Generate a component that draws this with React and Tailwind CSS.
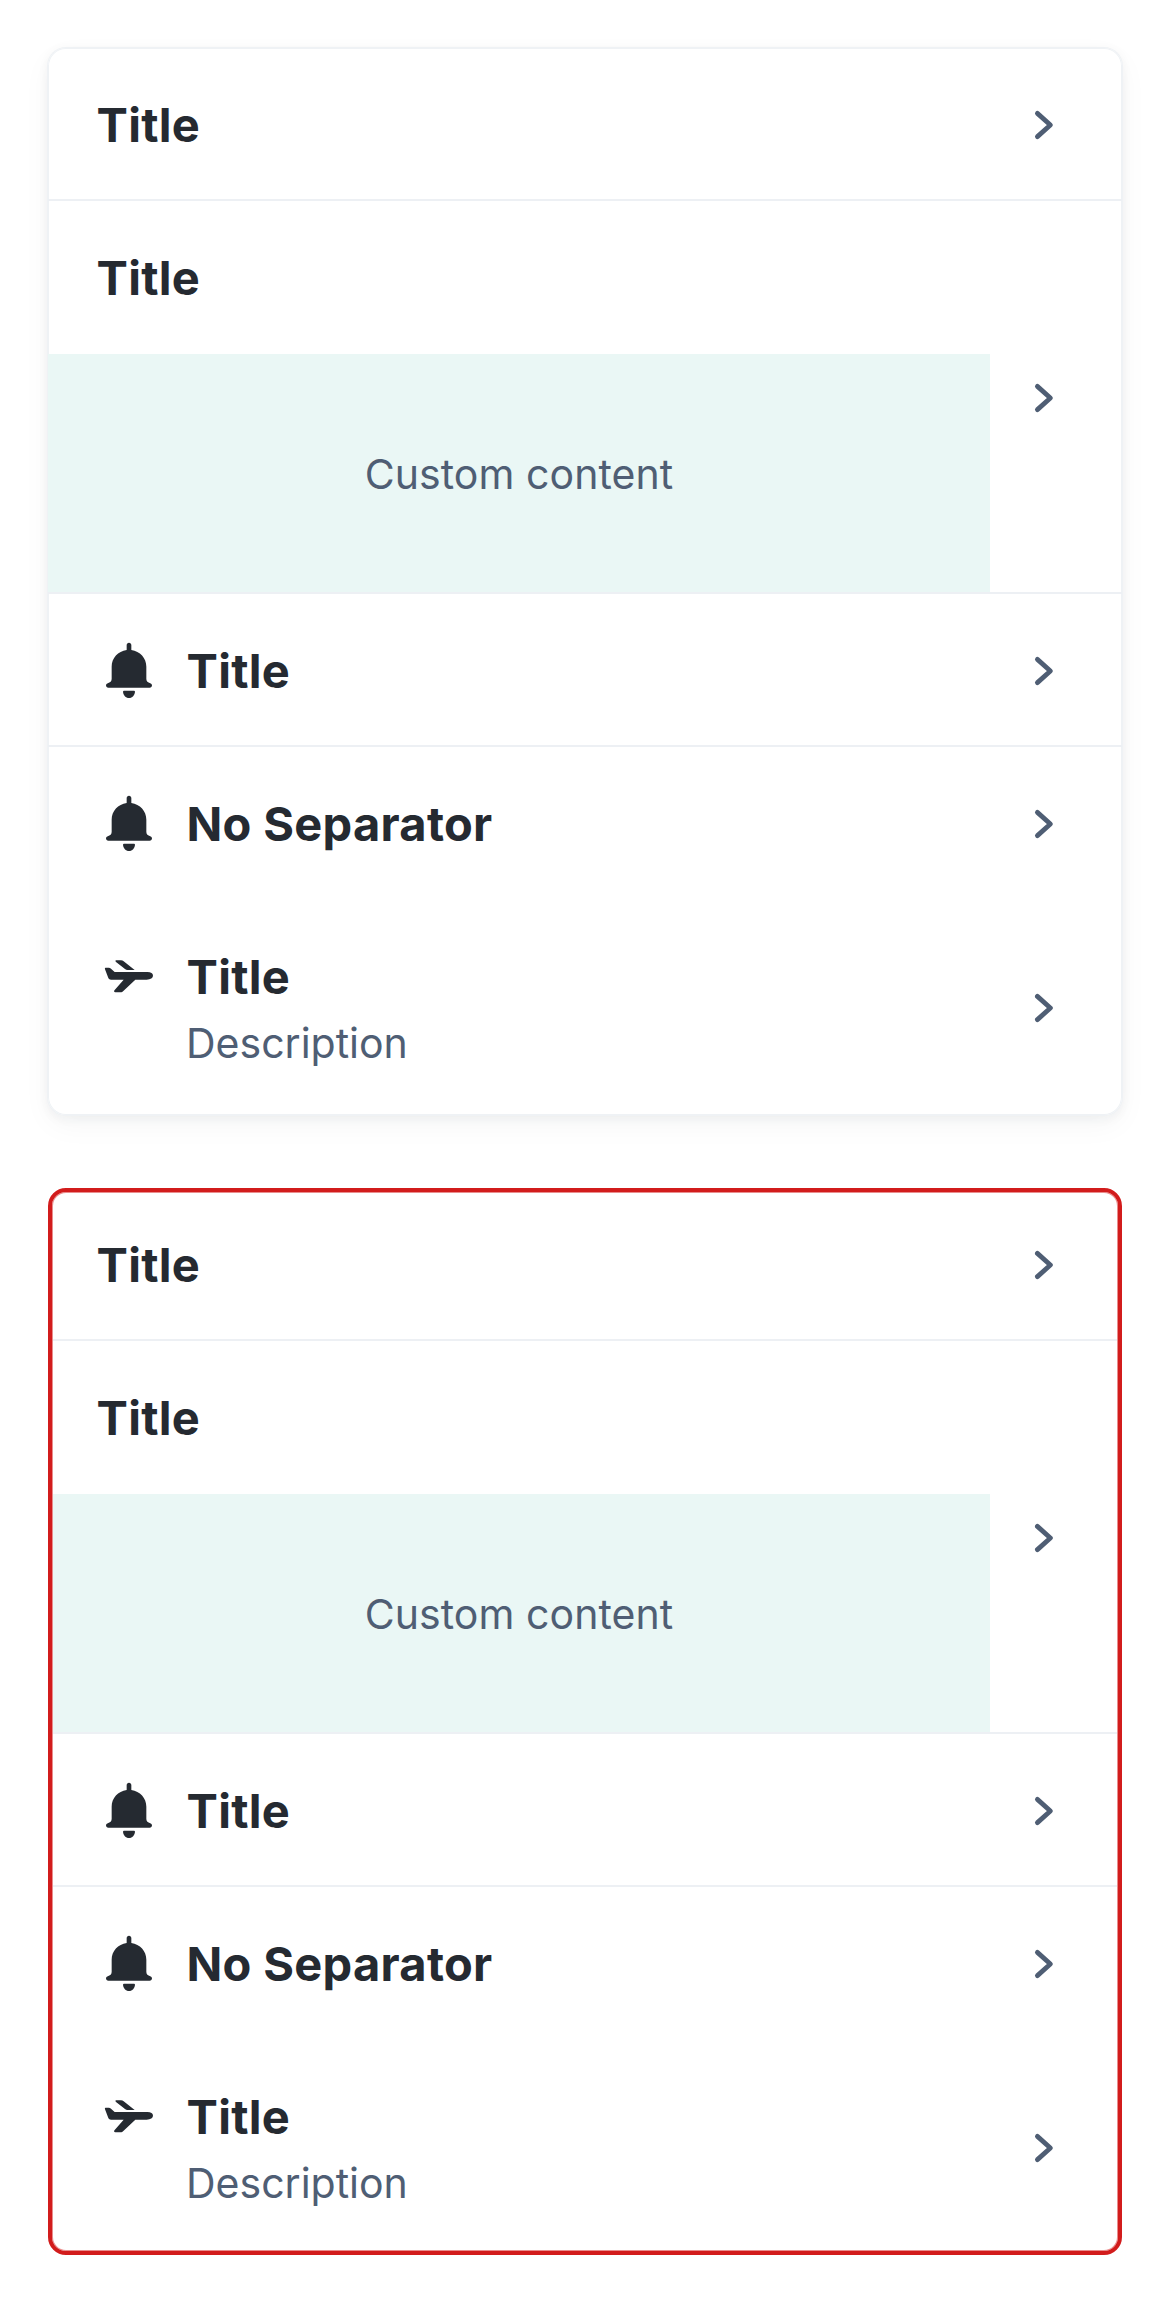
function Bell() {
  return (
    <svg viewBox="27 62 180 180" className="size-[60px]" fill="currentColor" aria-hidden="true">
      <path d="M117 67c-4 0-7 3-7 7v15c-26 4-45 24-45 50v36c0 7-3 10-10 13-5 2-7 4-7 7 0 4 3 7 7 7h124c4 0 7-3 7-7 0-3-2-5-7-7-7-3-10-6-10-13v-36c0-26-19-46-45-50V74c0-4-3-7-7-7Z" />
      <path d="M102 211h30c2 0 3 1 3 3-1 11-8 19-18 19s-17-8-18-19c0-2 1-3 3-3Z" />
    </svg>
  );
}

function Plane() {
  return (
    <svg viewBox="27 50 180 180" className="size-[60px]" fill="currentColor" aria-hidden="true">
      <path d="M80 90h13c3 0 6 1 8 3l33 26h-21c-3 0-6-1-8-3L78 95c-3-3-2-5 2-5Z" />
      <path d="M48 112h8c3 0 5 1 7 3l11 10h98c11 0 17 4 17 11s-7 11-19 12h-34l-36 34c-2 2-5 4-8 4H76c-4 0-5-4-2-7l27-31H63c-4 0-6-2-8-5l-10-26c-1-3 0-5 3-5Z" />
    </svg>
  );
}

function Chevron() {
  return (
    <svg viewBox="0 0 60 60" className="mr-[48px] size-[60px] shrink-0 text-[#4f5e74]" fill="none" stroke="currentColor" strokeWidth="4.8" strokeLinecap="round" strokeLinejoin="round" aria-hidden="true">
      <path d="M23.4 18.4 36.4 30 23.4 41.6" />
    </svg>
  );
}

const titleClass = "text-[47px] leading-[72px] font-bold tracking-[0.3px] text-[#252a31]";
const bodyClass = "text-[41px] leading-[60px] text-[#4f5e74]";

function Row({ icon, title, description, separator, className }) {
  return (
    <div className={`flex items-center justify-between ${separator ? "border-b-2 border-[#edf0f4] pt-[2px]" : ""} ${className}`}>
      <div className="flex items-start pl-[48px]">
        {icon && <div className="mr-[27px] ml-[3px] flex h-[72px] items-center text-[#252a31]">{icon}</div>}
        <div>
          <div className={`pl-[0.5px] ${titleClass}`}>{title}</div>
          {description && <div className={`mb-px ${bodyClass}`}>{description}</div>}
        </div>
      </div>
      <Chevron />
    </div>
  );
}

function CustomRow() {
  return (
    <div className="flex h-[393px] items-center justify-between border-b-2 border-[#edf0f4]">
      <div className="w-[942px] self-stretch">
        <div className="flex h-[153px] items-center pl-[48.5px]">
          <div className={titleClass}>Title</div>
        </div>
        <div className="flex h-[238px] items-center justify-center bg-[#eaf7f5] pt-[2px]">
          <div className={`tracking-[0.05px] ${bodyClass}`}>Custom content</div>
        </div>
      </div>
      <div className="pt-[2px]">
        <Chevron />
      </div>
    </div>
  );
}

function Card({ className, overlay }) {
  return (
    <div className={`relative h-[1067px] w-[1074px] rounded-[18px] bg-white ${className}`}>
      <div className="overflow-hidden rounded-[18px]">
        <Row title="Title" separator className="h-[153px]" />
        <CustomRow />
        <Row icon={<Bell />} title="Title" separator className="h-[153px]" />
        <Row icon={<Bell />} title="No Separator" className="h-[153px]" />
        <Row icon={<Plane />} title="Title" description="Description" className="h-[215px]" />
      </div>
      {overlay}
    </div>
  );
}

export default function App() {
  return (
    <main className="flex h-[2304px] flex-col items-center gap-[73px] bg-white pt-[48px] font-['Inter',sans-serif]">
      <Card className="shadow-[inset_0_0_0_1px_#eff2f5,0_0_0_1px_#eff2f5,0_3px_12px_rgba(37,42,49,0.06),0_10px_30px_rgba(37,42,49,0.04)]" />
      <Card
        overlay={
          <div className="pointer-events-none absolute inset-0 rounded-[18px] border-4 border-[#d21c1c] shadow-[inset_0_0_0_1px_#e98d8d]" />
        }
      />
    </main>
  );
}
